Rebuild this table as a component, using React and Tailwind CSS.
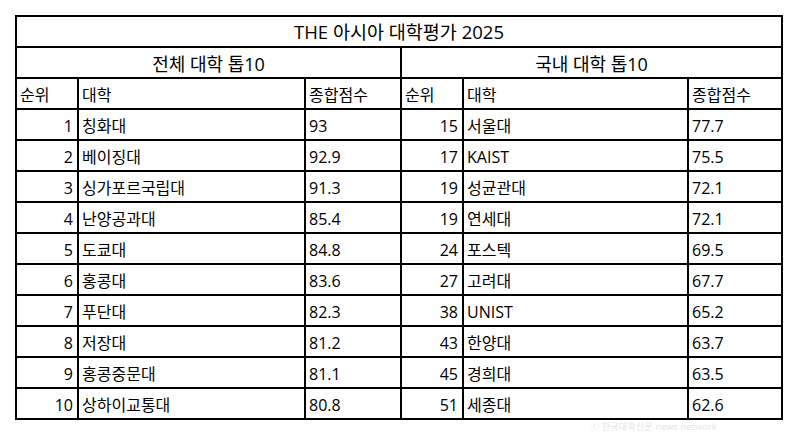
const overall = [
  [1, "칭화대", "93"],
  [2, "베이징대", "92.9"],
  [3, "싱가포르국립대", "91.3"],
  [4, "난양공과대", "85.4"],
  [5, "도쿄대", "84.8"],
  [6, "홍콩대", "83.6"],
  [7, "푸단대", "82.3"],
  [8, "저장대", "81.2"],
  [9, "홍콩중문대", "81.1"],
  [10, "상하이교통대", "80.8"],
];

const domestic = [
  [15, "서울대", "77.7"],
  [17, "KAIST", "75.5"],
  [19, "성균관대", "72.1"],
  [19, "연세대", "72.1"],
  [24, "포스텍", "69.5"],
  [27, "고려대", "67.7"],
  [38, "UNIST", "65.2"],
  [43, "한양대", "63.7"],
  [45, "경희대", "63.5"],
  [51, "세종대", "62.6"],
];

const font = { fontFamily: '"Open Sans", "Noto Sans CJK KR", sans-serif' };

const Cell = ({ children, className = "" }) => (
  <div className={`bg-white flex items-center pt-[2px] leading-none whitespace-nowrap ${className}`}>
    {children}
  </div>
);

const App = () => {
  return (
    <div className="w-[800px] h-[434px] bg-white relative" style={font}>
      <div className="absolute left-[15px] top-[15px] w-[768px]">
        <div className="grid grid-cols-[60px_225px_94px_60px_223px_92px] auto-rows-[29px] gap-[2px] p-[2px] bg-black text-black text-[16px]">
          <Cell className="col-span-6 justify-center text-[18.5px]">THE 아시아 대학평가 2025</Cell>
          <Cell className="col-span-3 justify-center text-[18px]">전체 대학 톱10</Cell>
          <Cell className="col-span-3 justify-center text-[18px]">국내 대학 톱10</Cell>

          <Cell className="pl-[3px]">순위</Cell>
          <Cell className="pl-[3px]">대학</Cell>
          <Cell className="pl-[3px]">종합점수</Cell>
          <Cell className="pl-[3px]">순위</Cell>
          <Cell className="pl-[3px]">대학</Cell>
          <Cell className="pl-[3px]">종합점수</Cell>

          {overall.map((row, i) => {
            const dom = domestic[i];
            return [
              <Cell key={`a${i}`} className="justify-end pr-[4px]">{row[0]}</Cell>,
              <Cell key={`b${i}`} className="pl-[3px]">{row[1]}</Cell>,
              <Cell key={`c${i}`} className="pl-[3px]">{row[2]}</Cell>,
              <Cell key={`d${i}`} className="justify-end pr-[4px]">{dom[0]}</Cell>,
              <Cell key={`e${i}`} className="pl-[3px]">{dom[1]}</Cell>,
              <Cell key={`f${i}`} className="pl-[3px]">{dom[2]}</Cell>,
            ];
          })}
        </div>
      </div>
      <div className="absolute left-[590px] top-[422px] text-[9px] leading-none text-[#e4e4e4] tracking-wide">
        ⓒ 한국대학신문 news network
      </div>
    </div>
  );
};

export default App;
